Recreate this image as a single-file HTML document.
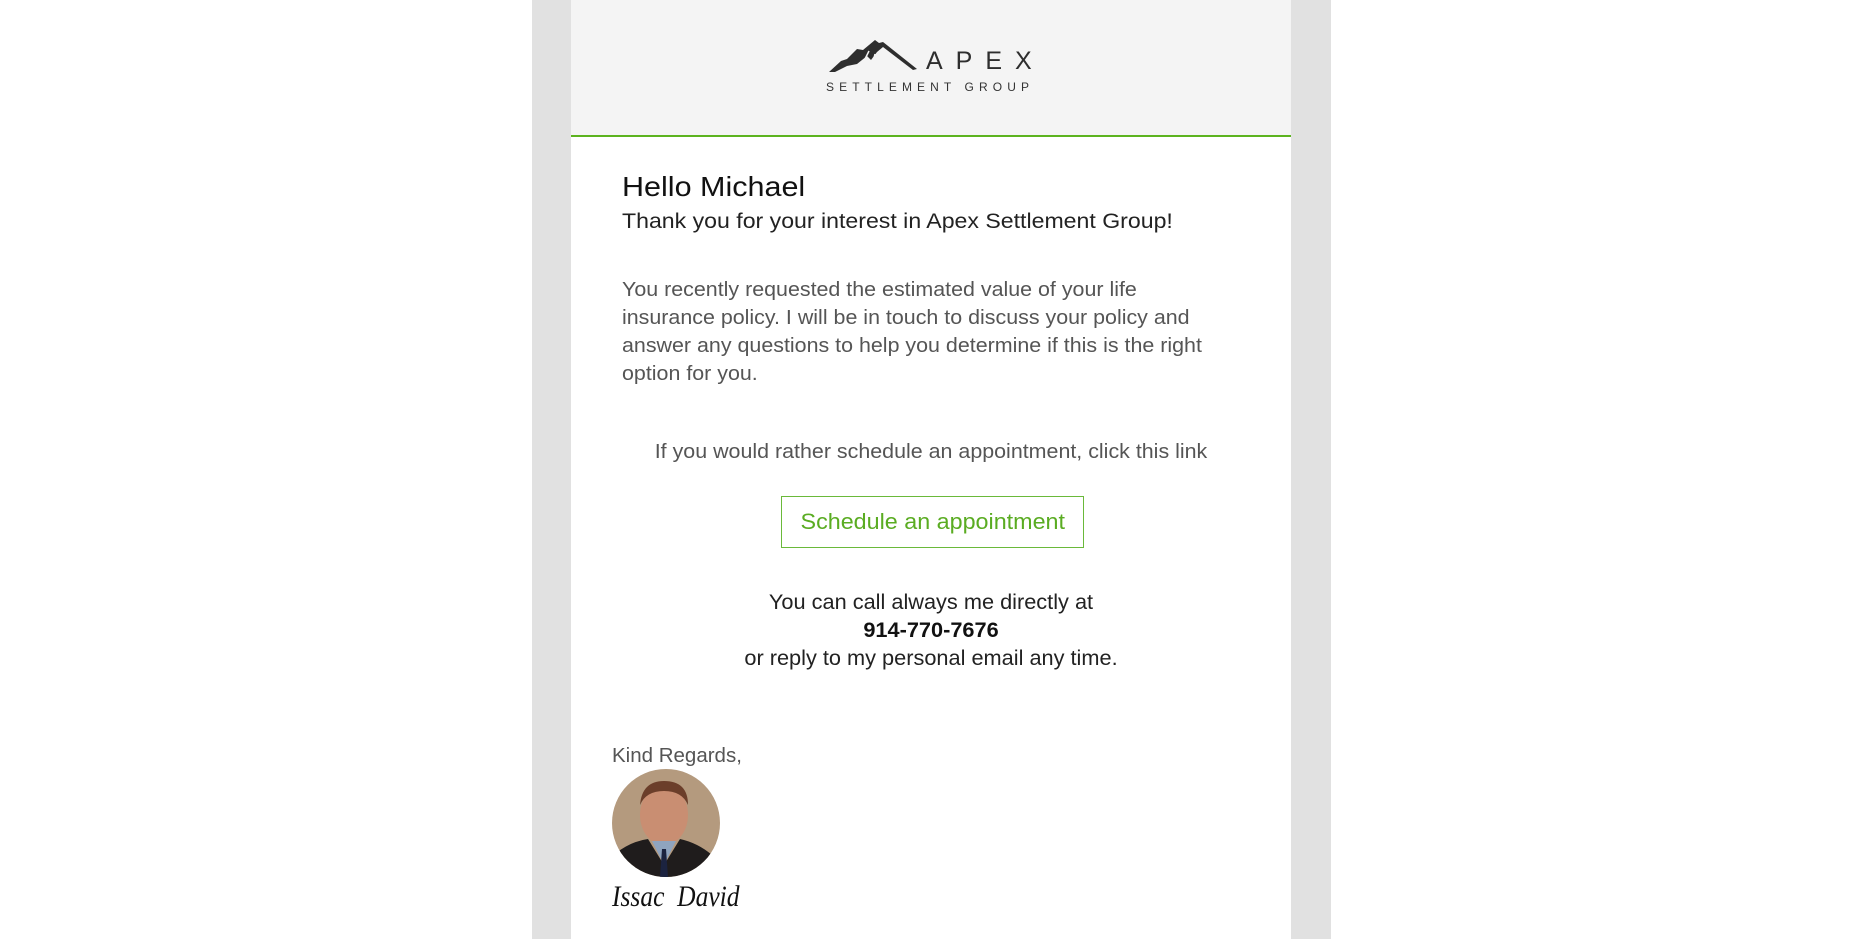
<!DOCTYPE html>
<html><head><meta charset="utf-8"><style>
*{margin:0;padding:0;box-sizing:border-box}
body{width:1864px;height:939px;background:#fff;font-family:"Liberation Sans",sans-serif;position:relative;overflow:hidden}
.gray{position:absolute;left:532px;width:799px;top:0;height:939px;background:#e1e1e1}
.main{position:absolute;left:571px;width:720px;top:0;height:939px;background:#fff}
.head{position:absolute;left:0;top:0;width:720px;height:137px;background:#f4f4f4;border-bottom:2px solid #5cb31f}
.t{position:absolute;white-space:nowrap}
.l{transform-origin:left center}
.c{transform-origin:center center}
</style></head><body>
<div class="gray"></div>
<div class="main">
 <div class="head">
  <svg style="position:absolute;left:258px;top:39px" width="92" height="34" viewBox="0 0 92 34">
   <path d="M0 33 L12 22 L18 20 L28 10 L34 11 L46 1 L50 4 L54 3 L88 30 L84 31 L54 8 L48 13 L42 21 L38 17 L28 25 L18 27 L6 33 Z" fill="#2e2e2e"/>
   <path d="M36 20 L40 12 M44 23 L46 15 M52 21 L50 13" stroke="#f4f4f4" stroke-width="1.5"/>
  </svg>
  <div class="t" style="left:355px;top:47px;font-size:25px;letter-spacing:13px;color:#2e2e2e">APEX</div>
  <div class="t" style="left:255px;top:80px;font-size:12px;letter-spacing:5.1px;color:#333">SETTLEMENT GROUP</div>
 </div>
 <div class="t l" style="left:51px;top:171px;font-size:28px;color:#111;transform:scaleX(1.09)">Hello Michael</div>
 <div class="t l" style="left:51px;top:210px;font-size:21px;color:#222;transform:scaleX(1.1)">Thank you for your interest in Apex Settlement Group!</div>
 <div class="l" style="position:absolute;left:51px;top:276px;font-size:20.5px;line-height:28px;color:#555;white-space:nowrap;transform:scaleX(1.045)">You recently requested the estimated value of your life<br>insurance policy. I will be in touch to discuss your policy and<br>answer any questions to help you determine if this is the right<br>option for you.</div>
 <div class="t c" style="left:0;width:720px;text-align:center;top:440px;font-size:20.5px;color:#555;transform:scaleX(1.045)">If you would rather schedule an appointment, click this link</div>
 <div style="position:absolute;left:210px;top:496px;width:303px;height:52px;border:1px solid #6ab93a;color:#5aac22;font-size:22px;text-align:center;line-height:50px"><span style="display:inline-block;transform:scaleX(1.06)">Schedule an appointment</span></div>
 <div class="c" style="position:absolute;left:0;width:720px;top:589px;text-align:center;font-size:21px;line-height:28px;color:#222;transform:scaleX(1.035)">You can call always me directly at<br><b style="color:#111">914-770-7676</b><br>or reply to my personal email any time.</div>
 <div class="t" style="left:41px;top:744px;font-size:20.5px;color:#555">Kind Regards,</div>
 <svg style="position:absolute;left:41px;top:769px" width="108" height="108" viewBox="0 0 108 108">
  <defs><clipPath id="c"><circle cx="54" cy="54" r="54"/></clipPath></defs>
  <g clip-path="url(#c)">
   <rect width="108" height="108" fill="#b49a7e"/>
   <ellipse cx="52" cy="46" rx="24" ry="30" fill="#c98e72"/>
   <path d="M28 36 Q30 12 52 12 Q76 12 76 36 Q70 22 52 22 Q34 22 28 36Z" fill="#6b3e2a"/>
   <path d="M0 108 L4 84 Q20 72 36 70 L52 96 L68 70 Q86 74 100 86 L108 108Z" fill="#1f1c1c"/>
   <path d="M40 72 L52 96 L64 72 Z" fill="#8fa4bf"/>
   <path d="M50 80 L54 80 L56 108 L48 108Z" fill="#1b2340"/>
  </g>
 </svg>
 <div class="t l" style="left:41px;top:880px;font-size:30px;font-family:'Liberation Serif',serif;font-style:italic;color:#111;transform:scaleX(0.85)">Issac &nbsp;David</div>
</div>
</body></html>
